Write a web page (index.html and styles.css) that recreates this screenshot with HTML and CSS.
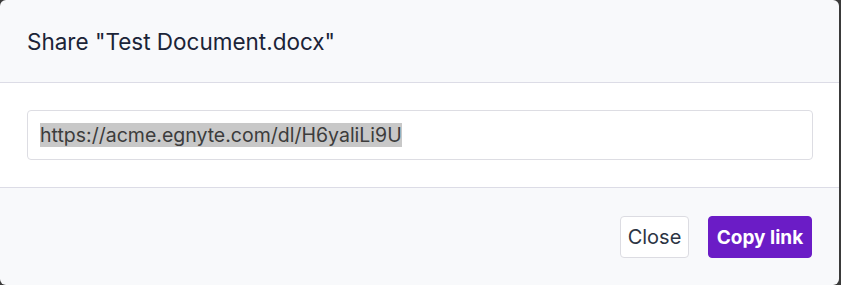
FILE: index.html
```html
<!DOCTYPE html>
<html lang="en">
<head>
<meta charset="utf-8">
<title>Share</title>
<link rel="stylesheet" href="styles.css">
</head>
<body>
<div class="dialog">
  <div class="dialog-header">
    <h2 class="dialog-title">Share "Test Document.docx"</h2>
  </div>
  <div class="dialog-body">
    <div class="link-field"><span class="link-selected">https://acme.egnyte.com/dl/H6yaliLi9U</span></div>
  </div>
  <div class="dialog-footer">
    <button class="btn btn-secondary">Close</button>
    <button class="btn btn-primary">Copy link</button>
  </div>
</div>
</body>
</html>
```
FILE: styles.css
```css
html, body {
  margin: 0;
  padding: 0;
  background: #3a3a3a;
  width: 841px;
  height: 285px;
  overflow: hidden;
}
body {
  font-family: Inter, "Noto Sans", sans-serif;
}
.dialog {
  width: 839px;
  height: 285px;
  background: #f8f9fb;
  border-radius: 6px;
  display: flex;
  flex-direction: column;
  overflow: hidden;
}
.dialog-header {
  height: 82px;
  border-bottom: 1px solid #dcdce6;
  display: flex;
  align-items: center;
  padding: 0 27px;
  box-sizing: content-box;
}
.dialog-title {
  margin: 0;
  font-size: 22.5px;
  font-weight: 400;
  color: #1b2438;
}
.dialog-body {
  background: #ffffff;
  padding: 27px 26px 27px 27px;
  border-bottom: 1px solid #dcdce6;
}
.link-field {
  height: 48px;
  border: 1px solid #dddde3;
  border-radius: 4px;
  display: flex;
  align-items: center;
  padding: 0 12px;
  font-size: 19.5px;
  color: #3c3c3c;
}
.link-selected {
  background: #c8c8c8;
  line-height: 24px;
}
.dialog-footer {
  flex: 1;
  display: flex;
  justify-content: flex-end;
  align-items: flex-start;
  gap: 19px;
  padding: 28px 27px 0 0;
}
.btn {
  height: 42px;
  font-family: Inter, "Noto Sans", sans-serif;
  border-radius: 4px;
  padding: 0;
  cursor: pointer;
}
.btn-secondary {
  width: 69px;
  font-size: 20px;
  background: #ffffff;
  border: 1px solid #dcdce2;
  color: #2c3444;
}
.btn-primary {
  width: 104px;
  font-size: 19px;
  background: #6b1cc6;
  border: 1px solid #6b1cc6;
  color: #ffffff;
  font-weight: 700;
}
```
